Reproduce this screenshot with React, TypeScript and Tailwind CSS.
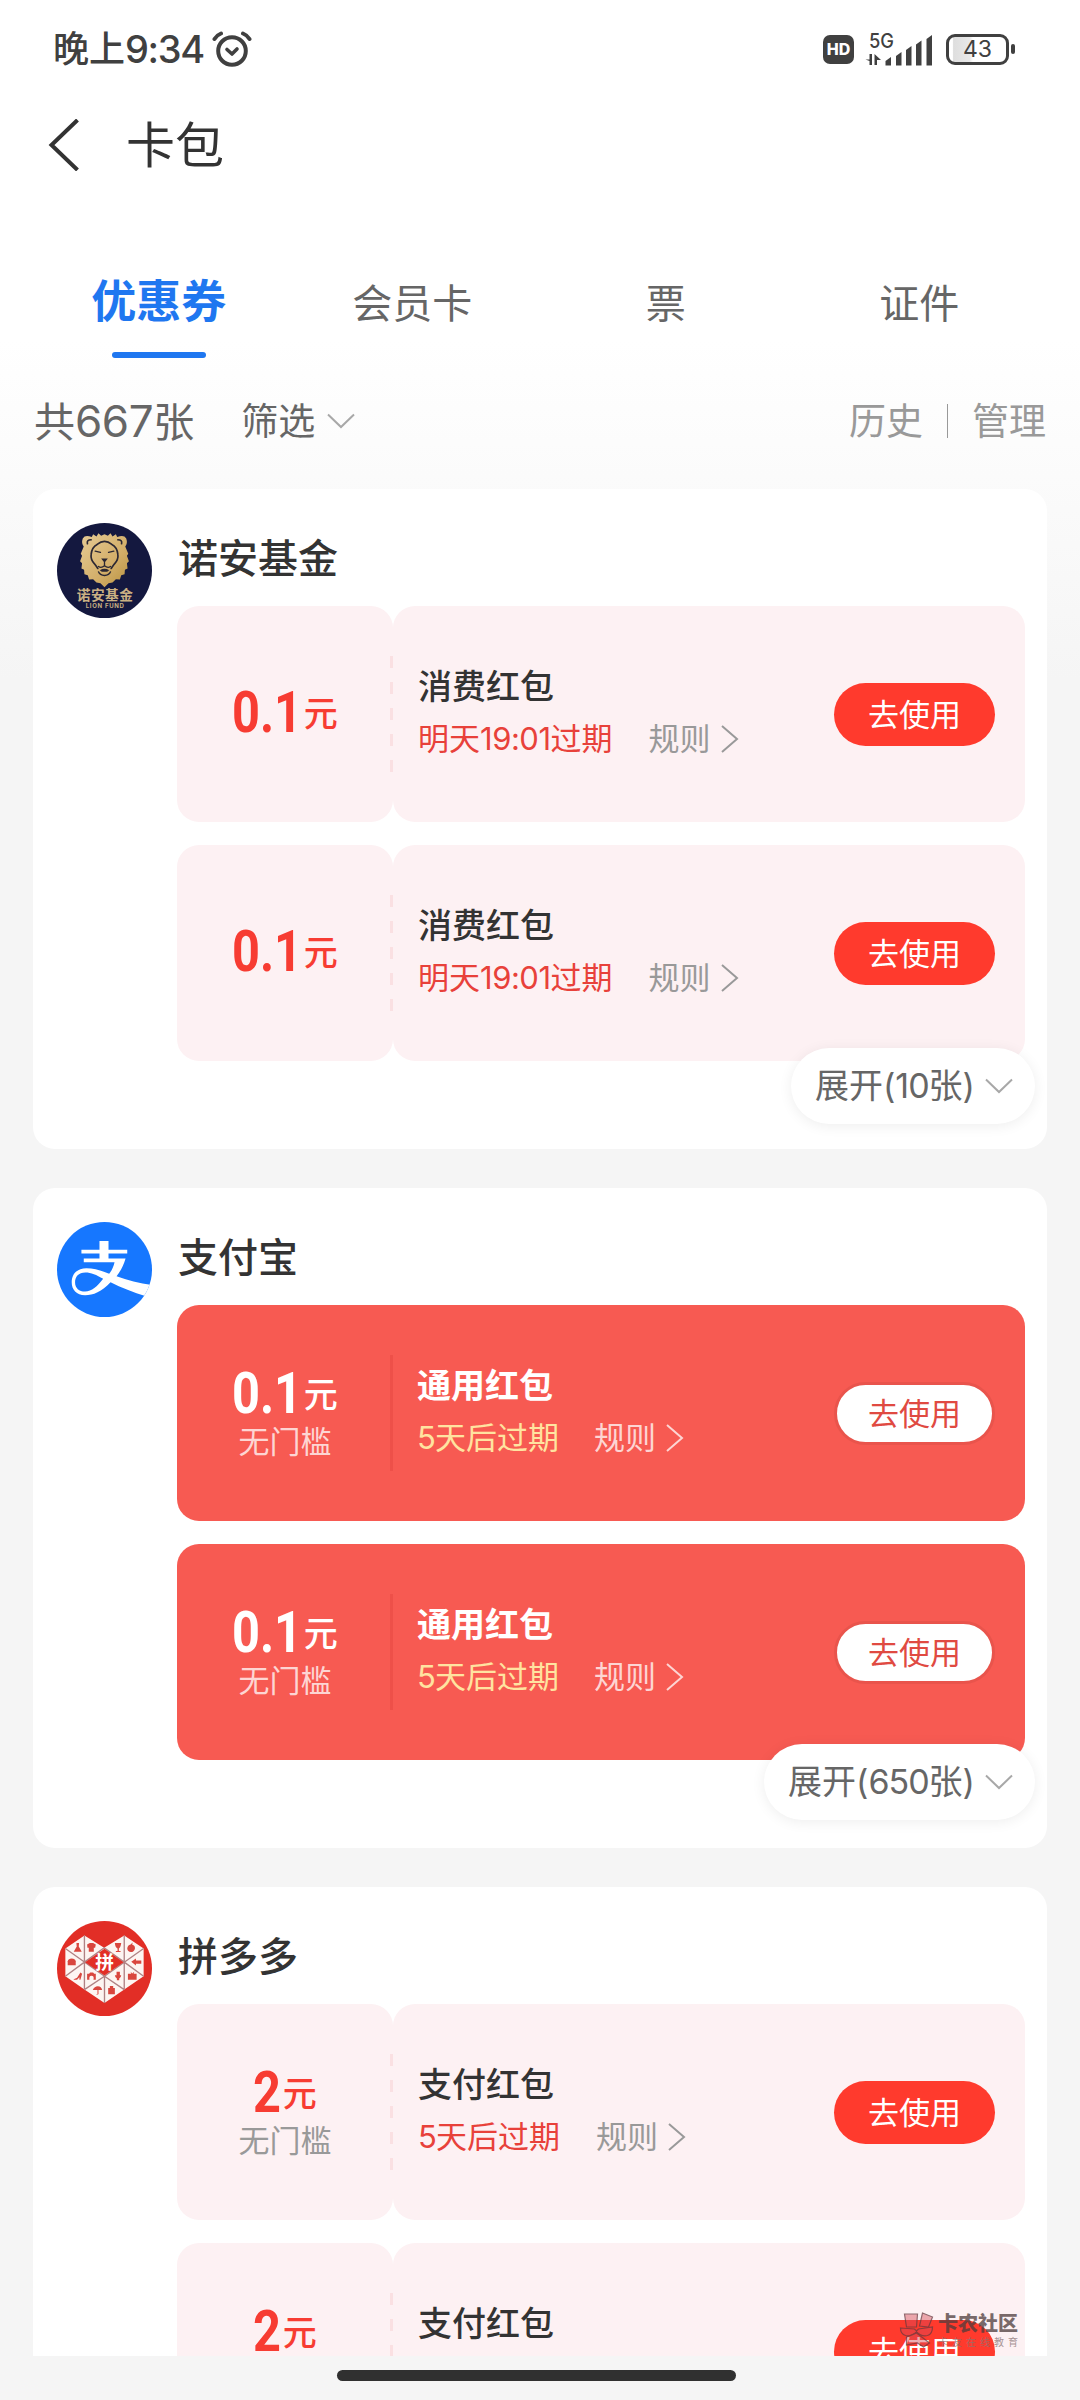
import type { ReactNode } from "react";

type Coupon = {
  amount: string;
  condition?: string;
  title: string;
  expire: ReactNode;
};

type Merchant = {
  name: string;
  logo: ReactNode;
  variant: "light" | "solid";
  coupons: Coupon[];
  more?: string;
};

// Latin digits sit a little tighter than the CJK text around them
function Num({ children }: { children: ReactNode }) {
  return <span className="tracking-[-0.03em]">{children}</span>;
}

function LionLogo() {
  return (
    <svg viewBox="0 0 284 284" className="size-full">
      <defs>
        <linearGradient id="gold" x1="0" y1="0" x2="1" y2="1">
          <stop offset="0" stopColor="#e6cc96" />
          <stop offset="0.6" stopColor="#d3ae69" />
          <stop offset="1" stopColor="#b8923f" />
        </linearGradient>
      </defs>
      <circle cx="142" cy="142" r="142" fill="#14183f" />
      <path
        fill="url(#gold)"
        d="M142 34 L152 38 L160 31 L166 40 L176 34 L180 42 Q200 34 207 46 Q212 60 204 70 L213 92 L209 98 L215 114 L209 120 L211 136 L203 140 L202 153 L192 156 L188 169 L176 168 L166 178 L154 180 L142 192 L130 180 L118 178 L108 168 L96 169 L92 156 L82 153 L81 140 L73 136 L75 120 L69 114 L75 98 L71 92 L80 70 Q72 60 77 46 Q84 34 104 42 L108 34 L118 40 L124 31 L132 38 Z"
      />
      <g fill="none" stroke="#2c2833" strokeWidth="5" strokeLinecap="round" strokeLinejoin="round">
        <path d="M91 62 Q88 50 102 50 M193 62 Q196 50 182 50" />
        <path d="M120 64 Q142 46 164 64 Q180 72 182 94 Q184 110 172 122 Q166 130 162 136 M120 64 Q104 72 102 94 Q100 110 112 122 Q118 130 122 136" />
        <path d="M142 118 V128 M142 128 Q132 136 124 130 M142 128 Q152 136 160 130" strokeWidth="4" />
        <path d="M114 84 L130 88 M170 84 L154 88 M124 146 Q128 156 142 157 Q156 156 160 146" strokeWidth="4" />
      </g>
      <path d="M132 106 H152 L142 119 Z M128 141 Q142 133 156 141 L150 146 H134 Z" fill="#2c2833" />
      <text x="143" y="230" textAnchor="middle" fontSize="41" fontWeight="700" fill="#cbb183" textLength="168">
        诺安基金
      </text>
      <text x="143" y="254" textAnchor="middle" fontSize="18" fontWeight="700" fill="#cbb183" textLength="114">
        LION FUND
      </text>
    </svg>
  );
}

function AlipayLogo() {
  return (
    <svg viewBox="0 0 284 284" className="size-full">
      <clipPath id="alipay-clip">
        <circle cx="142" cy="142" r="142" />
      </clipPath>
      <circle cx="142" cy="142" r="142" fill="#1677ff" />
      <g clipPath="url(#alipay-clip)" fill="#fff">
        <path d="M127 57 H154 V83 H210 V94 H154 V109 H205 C198 132 189 148 178 162 C210 174 246 184 284 188 L266 222 C228 210 192 196 160 180 C134 208 108 219 84 219 C58 219 44 202 44 180 C44 154 62 138 88 138 C112 138 134 146 156 155 C163 146 169 134 172 120 H80 V109 H127 V94 H73 V83 H127 Z M138 170 C118 158 102 151 85 151 C64 151 54 164 54 180 C54 198 66 208 84 208 C104 208 120 194 138 170 Z" />
      </g>
    </svg>
  );
}

function PddLogo() {
  return (
    <svg viewBox="0 0 284 284" className="size-full">
      <circle cx="142" cy="142" r="142" fill="#e22e26" />
      <path
        fill="#fdf5f2"
        d="M25 82 L82 43 L141 80 L201 43 L259 82 V165 L201 205 L142 245 L82 205 L25 165 Z"
      />
      <path
        fill="none"
        stroke="#b08284"
        strokeWidth="4"
        d="M82 43 V205 M201 43 V205 M142 165 V245 M25 82 L142 165 L259 82 M25 165 L82 123 L141 80 L201 123 L259 165 M82 205 L142 165 L201 205"
      />
      <path fill="#e22e26" d="M84 123 L142 83 L199 123 L142 163 Z" />
      <text x="142" y="144" textAnchor="middle" fontSize="56" fontWeight="700" fill="#fff">
        拼
      </text>
      <g fill="#d9463e">
        <path d="M58 66 H66 L65 76 L74 92 H50 L59 76 Z" />
        <path d="M90 70 L98 66 H108 L116 70 L114 80 H110 V92 H95 V80 H91 Z" />
        <path d="M173 66 H192 Q190 80 185 82 V90 H190 V93 H176 V90 H181 V82 Q174 80 173 66 Z" />
        <path d="M220 70 L226 64 L225 71 Q234 73 233 83 Q230 93 221 93 Q211 92 210 82 Q211 72 220 70 Z" />
        <path d="M32 132 V120 Q34 112 44 112 Q54 112 56 120 V132 Z" />
        <path d="M222 122 L236 112 V118 H252 V128 H236 V133 Z" />
        <path d="M50 174 L60 170 L70 154 L75 158 L70 176 H67 V168 L60 176 H50 Z" />
        <path d="M90 176 V158 H96 L99 154 H108 L111 158 H116 V176 H109 Q112 164 103 164 Q95 164 97 176 Z" />
        <path d="M178 152 H188 V162 H192 Q191 170 186 172 V177 H179 V172 Q174 170 173 162 H178 Z" />
        <path d="M212 158 H222 L220 152 L225 157 L231 152 L229 158 H238 V176 H212 Z" />
        <path d="M107 206 Q112 195 122 195 Q133 196 135 206 H124 V218 Q121 222 117 218 H121 V206 Z" />
        <path d="M153 200 H158 V194 H168 V200 H173 V219 H153 Z" />
      </g>
    </svg>
  );
}

const MERCHANTS: Merchant[] = [
  {
    name: "诺安基金",
    logo: <LionLogo />,
    variant: "light",
    more: "10",
    coupons: Array(2).fill({
      amount: "0.1",
      title: "消费红包",
      expire: <>明天<span className="tracking-[-0.015em]">19:01</span>过期</>,
    }),
  },
  {
    name: "支付宝",
    logo: <AlipayLogo />,
    variant: "solid",
    more: "650",
    coupons: Array(2).fill({
      amount: "0.1",
      condition: "无门槛",
      title: "通用红包",
      expire: <><Num>5</Num>天后过期</>,
    }),
  },
  {
    name: "拼多多",
    logo: <PddLogo />,
    variant: "light",
    coupons: Array(2).fill({
      amount: "2",
      condition: "无门槛",
      title: "支付红包",
      expire: <><Num>5</Num>天后过期</>,
    }),
  },
];

const TABS = ["优惠券", "会员卡", "票", "证件"];

function StatusBar() {
  return (
    <div className="flex h-[98px] shrink-0 items-center pr-[65px] pl-[53px] text-[#404040]">
      <div className="flex items-center text-[36px] leading-[40px] font-medium">
        晚上<span className="text-[38px] tracking-[-0.035em]">9:34</span>
      </div>
      <svg viewBox="0 0 40 36" className="mb-[1px] ml-[8px] h-[36px] w-[40px]" fill="none" stroke="currentColor" strokeLinecap="round">
        <circle cx="20" cy="20" r="13.8" strokeWidth="4" />
        <path d="M15 18.5 L20 23 L25 18" strokeWidth="3.6" strokeLinejoin="round" />
        <path d="M2.500 8 Q5 4 9 2.500 M37.500 8 Q35 4 31 2.500" strokeWidth="4" />
      </svg>
      <div className="ml-auto flex items-center">
        <div className="flex h-[29px] w-[31px] items-center justify-center rounded-[7px] bg-[#404040] text-[16px] leading-none font-extrabold text-white">
          HD
        </div>
        <svg viewBox="0 0 70 36" className="ml-[11px] h-[36px] w-[70px] overflow-visible" fill="currentColor">
          <text x="4" y="16.500" fontSize="20" fontWeight="500" textLength="25" lengthAdjust="spacingAndGlyphs">5G</text>
          <path d="M4.500 23 H7 V34 H4.500 V30 L0.500 28.500 H4.500 Z M9.500 34 V23 L16 29 H12 V34 Z" />
          <path d="M20.500 30 L26 26 V34.500 H20.500 Z M31 25 L36.500 21 V34.500 H31 Z M41 19 L46.500 15 V34.500 H41 Z M51 13.500 L56.500 9.500 V34.500 H51 Z M61.500 8 L67 4 V34.500 H61.500 Z" />
        </svg>
        <div className="ml-[11px] flex h-[31px] w-[63px] items-center justify-center rounded-[9px] border-[3px] border-[#404040] bg-[linear-gradient(to_right,#fff_6%,#dedede_8%,#e8e8e8_36%,#fff_42%)] text-[23px] leading-none">
          43
        </div>
        <div className="ml-[2px] h-[10px] w-[4px] rounded-full bg-[#404040]" />
      </div>
    </div>
  );
}

function ChevronDown() {
  return (
    <svg viewBox="0 0 28 16" className="h-[16px] w-[28px]" fill="none" stroke="#a8a8a8" strokeWidth="2">
      <path d="M1 1.500 L14 14 L27 1.500" />
    </svg>
  );
}

function CouponCard({ coupon, variant }: { coupon: Coupon; variant: "light" | "solid" }) {
  const solid = variant === "solid";
  // scale-x keeps the unscaled advance width, so the surplus is pulled back
  const pull = coupon.amount.length > 1 ? "mr-[-12px]" : "mr-[-4px]";

  return (
    <div className={solid ? "relative flex h-[216px] rounded-[22px] bg-[#f75a52]" : "relative flex h-[216px]"}>
      <div
        className={
          solid
            ? "flex w-[216px] flex-col items-center justify-center text-white"
            : "flex w-[216px] flex-col items-center justify-center rounded-[22px] bg-[#fdf1f3] text-[#f73c32]"
        }
      >
        <div className={coupon.condition ? "mt-[3px] flex h-[48px] items-center" : "mb-[4px] flex h-[48px] items-center"}>
          <span className={`${pull} origin-left scale-x-[0.84] font-[Roboto] text-[58px] leading-[48px] font-bold`}>
            {coupon.amount}
          </span>
          <span className="mt-[4px] text-[34px] leading-[40px] font-medium">元</span>
        </div>
        {coupon.condition && (
          <div className={solid ? "mt-[6px] text-[31px] leading-[38px] text-[#fdd5d3]" : "mt-[6px] text-[31px] leading-[38px] text-[#999]"}>
            {coupon.condition}
          </div>
        )}
      </div>
      {/* tear line between the two halves */}
      {solid ? (
        <div className="absolute top-[50px] left-[213px] h-[116px] w-[3px] bg-[#ee5049]" />
      ) : (
        <svg viewBox="0 0 3 116" className="absolute top-[50px] left-[213px] h-[116px] w-[3px]">
          <path d="M1.500 0 V116" stroke="#fae0e2" strokeWidth="3" strokeDasharray="12 14" />
        </svg>
      )}
      <div
        className={
          solid
            ? "flex flex-1 items-center pr-[30px] pl-[24px]"
            : "flex flex-1 items-center rounded-[22px] bg-[#fdf1f3] pr-[30px] pl-[25px]"
        }
      >
        <div className="mb-[3px] flex-1">
          <div className={solid ? "text-[34px] leading-[48px] font-bold text-white" : "text-[34px] leading-[48px] font-medium text-[#333]"}>
            {coupon.title}
          </div>
          <div className="mt-[4px] flex items-center text-[31px] leading-[48px]">
            <span className={solid ? "text-[#ffe3a0]" : "text-[#e8413a]"}>{coupon.expire}</span>
            <span className={solid ? "ml-[35px] text-[#fdd5d3]" : "ml-[36px] text-[#999]"}>规则</span>
            <svg
              viewBox="0 0 18 28"
              className={solid ? "ml-[10px] h-[28px] w-[18px] text-[#fdd5d3]" : "ml-[10px] h-[28px] w-[18px] text-[#999]"}
              fill="none"
              stroke="currentColor"
              strokeWidth="2"
            >
              <path d="M1 1 L16 14 L1 27" />
            </svg>
          </div>
        </div>
        <button
          className={
            solid
              ? "h-[63px] w-[161px] rounded-full border-[3px] border-[#e9544c] bg-white text-[31px] leading-none text-[#e04a42]"
              : "h-[63px] w-[161px] rounded-full bg-[#ff3a2d] text-[31px] leading-none text-white"
          }
        >
          去使用
        </button>
      </div>
    </div>
  );
}

function MerchantCard({ merchant }: { merchant: Merchant }) {
  const pillOffset = merchant.variant === "solid" ? "bottom-[28px]" : "bottom-[25px]";

  return (
    <section className="relative flex h-[660px] shrink-0 rounded-[22px] bg-white pt-[34px] pr-[22px] pl-[24px]">
      <div className="size-[95px] shrink-0">{merchant.logo}</div>
      <div className="ml-[25px] flex-1">
        <h2 className="ml-[1px] flex h-[83px] items-start pt-[6px] text-[40px] leading-[60px] font-medium text-[#333]">
          {merchant.name}
        </h2>
        <div className="flex flex-col gap-[23px]">
          {merchant.coupons.map((coupon, i) => (
            <CouponCard key={i} coupon={coupon} variant={merchant.variant} />
          ))}
        </div>
      </div>
      {merchant.more && (
        <button
          className={`${pillOffset} absolute right-[12px] flex h-[76px] items-center gap-[10px] rounded-full bg-white pr-[22px] pl-[24px] text-[34px] leading-none text-[#666] shadow-[0_2px_14px_rgba(0,0,0,0.07)]`}
        >
          <span>
            展开(<Num>{merchant.more}</Num>张)
          </span>
          <ChevronDown />
        </button>
      )}
    </section>
  );
}

function Watermark() {
  return (
    <div className="absolute top-[2312px] left-[899px] flex items-start opacity-75">
      <svg viewBox="0 0 34 36" className="h-[36px] w-[35px]" fill="#d94a55" fillOpacity="0.6" stroke="#6b3a40" strokeWidth="1.2">
        <path d="M5 2 L18 2 L17 15 H7 Z M23 1 L33 5 L29 15 L20 14 Z" />
        <path d="M1 16 L15 17 L17 19 L19 17 L33 15 Q33 22 28 23.500 Q22 25 17 20 Q12 25 6 23.500 Q1 22 1 16 Z" />
        <path d="M7 25 L17 21 L30 31 L24 35 L18 31 L7 33 Z" />
      </svg>
      <div className="ml-[4px] pt-[1px]">
        <div className="text-[20px] leading-[22px] font-black text-[#4e3c3c]">卡农社区</div>
        <div className="text-[10px] leading-[14px] tracking-[4px] text-[#8a7474]">卡友在线教育</div>
      </div>
    </div>
  );
}

export default function App() {
  return (
    <div className="relative flex h-[2400px] w-[1080px] flex-col overflow-hidden bg-[#f5f5f5] bg-[linear-gradient(to_bottom,#fff_340px,#f5f5f5_680px)] font-[Inter,'Noto_Sans_CJK_SC',sans-serif]">
      <StatusBar />

      <header className="flex h-[94px] shrink-0 items-center pl-[48px] text-[#333]">
        <svg viewBox="0 0 32 52" className="h-[52px] w-[32px]" fill="none" stroke="currentColor" strokeWidth="4">
          <path d="M29.500 1 L3.500 26 L29.500 51" />
        </svg>
        <h1 className="ml-[46px] text-[49px] leading-none">卡包</h1>
      </header>

      <nav className="mr-[34px] ml-[32px] mt-[65px] grid h-[101px] shrink-0 grid-cols-4">
        {TABS.map((tab, i) => (
          <div key={tab} className="flex flex-col items-center">
            <span
              className={
                i === 0
                  ? "mt-[12px] text-[45px] leading-[66px] font-bold text-[#1f77f0]"
                  : "mt-[17px] text-[40px] leading-[60px] text-[#666]"
              }
            >
              {tab}
            </span>
            {i === 0 && <span className="mt-[17px] h-[6px] w-[94px] shrink-0 rounded-full bg-[#1f77f0]" />}
          </div>
        ))}
      </nav>

      <div className="flex h-[131px] shrink-0 items-center px-[34px] pb-[5px] text-[37px] leading-none text-[#666]">
        <div className="text-[41px]">
          共<span className="text-[44px] tracking-[-0.01em]">667</span>张
        </div>
        <div className="mr-[12px] ml-[47px]">筛选</div>
        <ChevronDown />
        <div className="ml-auto text-[#999]">历史</div>
        <div className="mx-[24px] h-[34px] w-px bg-[#999]" />
        <div className="text-[#999]">管理</div>
      </div>

      <main className="flex min-h-0 flex-1 flex-col gap-[39px] overflow-hidden px-[33px]">
        {MERCHANTS.map((merchant) => (
          <MerchantCard key={merchant.name} merchant={merchant} />
        ))}
      </main>

      <footer className="flex h-[44px] shrink-0 bg-[#f5f5f5] pt-[14px] pl-[337px]">
        <div className="h-[11px] w-[399px] rounded-full bg-[#303030]" />
      </footer>

      <Watermark />
    </div>
  );
}
